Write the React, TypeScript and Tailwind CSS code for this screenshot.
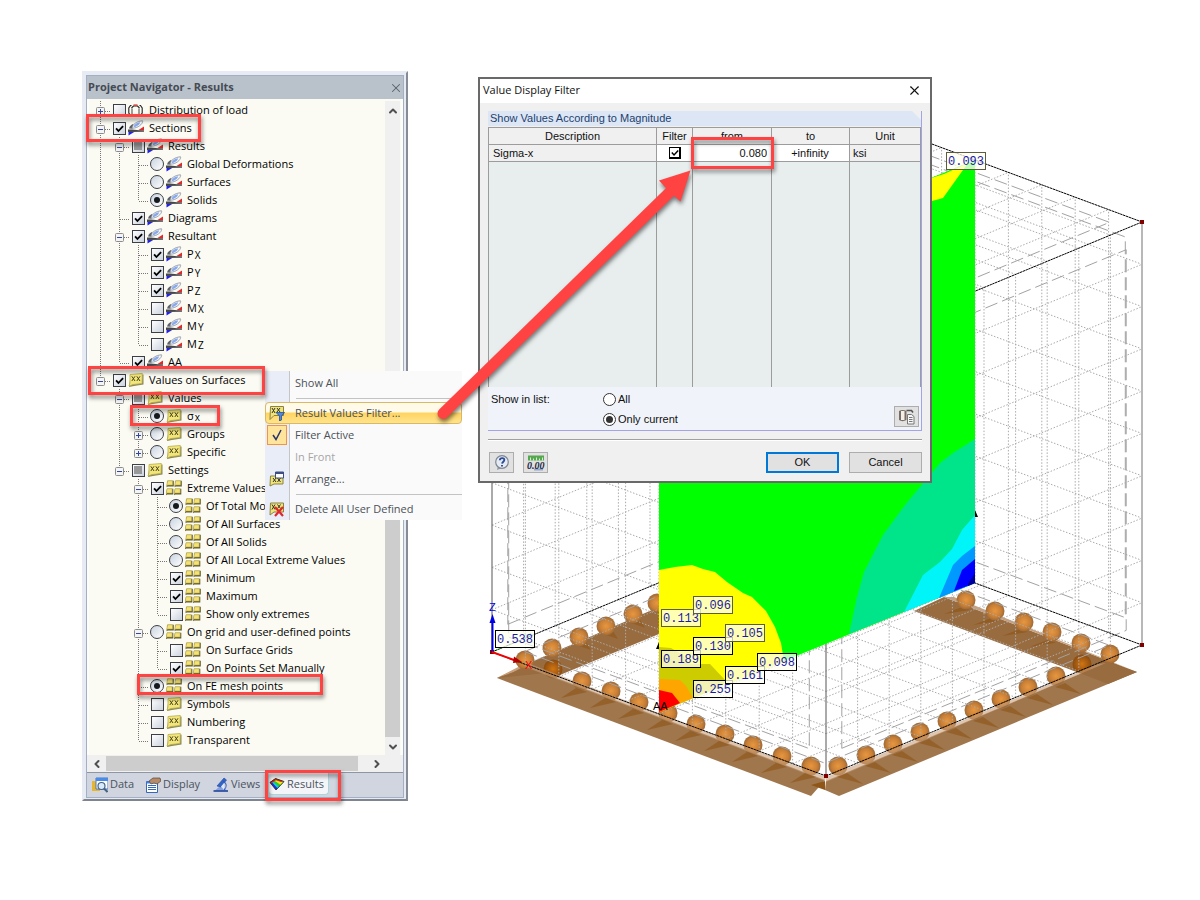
import React, { useState } from "react";
import { ChevronDown, ChevronLeft, ChevronRight, ChevronUp, X } from "lucide-react";

/* ------------------------------------------------------------------ */
/* Icons                                                               */
/* ------------------------------------------------------------------ */

type IconKind = "load" | "section" | "xx" | "grid";

function SectionIcon() {
  return (
    <svg viewBox="0 0 16 16" className="h-4 w-4 shrink-0">
      <path d="M0.500 15.500V11.500h6.500z" fill="#2323e0" />
      <path d="M10.500 10L16 6.500V10.500h-4z" fill="#dd2a2a" />
      <path d="M0 9.500h4l7 .8 5 .2v1.200l-16 .3z" fill="#45474c" />
      <path d="M1 8.600C1.500 6 3.500 4.800 5.500 3.800L4.500 8.800z" fill="#5c6068" />
      <path d="M4 8.200C4.500 4.500 8.500 1.200 14.500.8c.8 1.800-2.500 6.200-8 7.200z" fill="#f4f6fb" stroke="#858b96" strokeWidth=".8" />
      <path d="M5.500 7.200C6 4.600 9 2.600 12 2.300c0 1.600-2.300 4.500-6.500 4.900z" fill="#86a8ee" />
    </svg>
  );
}

function LoadIcon() {
  return (
    <svg viewBox="0 0 16 16" className="h-4 w-4 shrink-0" fill="none" stroke="#222" strokeWidth="1.100">
      <path d="M3.500 3.500H2.500L.8 6v5l1.700 2.500M11.500 3.500h1L14.200 6v5l-1.700 2.500" />
      <path d="M4 6.500V13M11 6.500V13" stroke="#555" />
      <path d="M3.500 6L5.500 4h4l2 2" />
      <path d="M5.500 3h4" stroke="#d22" />
    </svg>
  );
}

function XXIcon() {
  return (
    <svg viewBox="0 0 16 16" className="h-4 w-4 shrink-0">
      <path d="M2.500 3.500L15.500 2.500V12.500L6 14 1 15z" fill="#8b8857" />
      <path d="M2 2.500L14.300 1.500 14 11.500 5 12.500 1 14 2 11z" fill="#f2e67a" stroke="#b9ac4d" strokeWidth=".8" />
      <path d="M3.800 4.300l3.200 4.700M7 4.300L3.800 9M8.800 4.300L12 9M12 4.300L8.800 9" stroke="#4a4522" strokeWidth="1" />
    </svg>
  );
}

function GridIcon() {
  const cells = [
    [1.5, 0.8],
    [9.5, 0.8],
    [1, 8.8],
    [9, 8.8],
  ];
  return (
    <svg viewBox="0 0 16 16" className="h-4 w-4 shrink-0">
      {cells.map(([x, y]) => (
        <g key={`${x}-${y}`}>
          <path d={`M${x} ${y}h6.300v5.600h-6l-1.300 .8z`} fill="#5f5c33" />
          <path d={`M${x} ${y}h5.200v4.300h-5l-1 .7z`} fill="#f5e272" stroke="#a89b3f" strokeWidth=".5" />
        </g>
      ))}
    </svg>
  );
}

function NodeIcon({ kind }: { kind: IconKind }) {
  if (kind === "load") return <LoadIcon />;
  if (kind === "section") return <SectionIcon />;
  if (kind === "xx") return <XXIcon />;
  return <GridIcon />;
}

/* ------------------------------------------------------------------ */
/* Navigator tree                                                      */
/* ------------------------------------------------------------------ */

type State = "on" | "off" | "partial";

interface Node {
  label: string;
  sub?: string;
  guides: string;
  box: "check" | "radio";
  state: State;
  icon: IconKind;
  expander?: "+" | "-";
  last?: boolean;
  group?: string;
}

const nodes: Node[] = [
  { label: "Distribution of load", guides: "", box: "check", state: "off", icon: "load", expander: "+" },
  { label: "Sections", guides: "", box: "check", state: "on", icon: "section", expander: "-" },
  { label: "Results", guides: "|", box: "check", state: "partial", icon: "section", expander: "-" },
  { label: "Global Deformations", guides: "||", box: "radio", state: "off", icon: "section", group: "res" },
  { label: "Surfaces", guides: "||", box: "radio", state: "off", icon: "section", group: "res" },
  { label: "Solids", guides: "||", box: "radio", state: "on", icon: "section", last: true, group: "res" },
  { label: "Diagrams", guides: "|", box: "check", state: "on", icon: "section" },
  { label: "Resultant", guides: "|", box: "check", state: "on", icon: "section", expander: "-" },
  { label: "P", sub: "X", guides: "||", box: "check", state: "on", icon: "section" },
  { label: "P", sub: "Y", guides: "||", box: "check", state: "on", icon: "section" },
  { label: "P", sub: "Z", guides: "||", box: "check", state: "on", icon: "section" },
  { label: "M", sub: "X", guides: "||", box: "check", state: "off", icon: "section" },
  { label: "M", sub: "Y", guides: "||", box: "check", state: "off", icon: "section" },
  { label: "M", sub: "Z", guides: "||", box: "check", state: "off", icon: "section", last: true },
  { label: "AA", guides: "|", box: "check", state: "on", icon: "section", last: true },
  { label: "Values on Surfaces", guides: "", box: "check", state: "on", icon: "xx", expander: "-", last: true },
  { label: "Values", guides: " ", box: "check", state: "partial", icon: "xx", expander: "-" },
  { label: "σ", sub: "x", guides: " |", box: "radio", state: "on", icon: "xx", group: "val" },
  { label: "Groups", guides: " |", box: "radio", state: "off", icon: "xx", expander: "+", group: "val" },
  { label: "Specific", guides: " |", box: "radio", state: "off", icon: "xx", expander: "+", last: true, group: "val" },
  { label: "Settings", guides: " ", box: "check", state: "partial", icon: "xx", expander: "-", last: true },
  { label: "Extreme Values", guides: "  ", box: "check", state: "on", icon: "grid", expander: "-" },
  { label: "Of Total Model", guides: "  |", box: "radio", state: "on", icon: "grid", group: "ext" },
  { label: "Of All Surfaces", guides: "  |", box: "radio", state: "off", icon: "grid", group: "ext" },
  { label: "Of All Solids", guides: "  |", box: "radio", state: "off", icon: "grid", group: "ext" },
  { label: "Of All Local Extreme Values", guides: "  |", box: "radio", state: "off", icon: "grid", group: "ext" },
  { label: "Minimum", guides: "  |", box: "check", state: "on", icon: "grid" },
  { label: "Maximum", guides: "  |", box: "check", state: "on", icon: "grid" },
  { label: "Show only extremes", guides: "  |", box: "check", state: "off", icon: "grid", last: true },
  { label: "On grid and user-defined points", guides: "  ", box: "radio", state: "off", icon: "grid", expander: "-", group: "set" },
  { label: "On Surface Grids", guides: "  |", box: "check", state: "off", icon: "grid" },
  { label: "On Points Set Manually", guides: "  |", box: "check", state: "on", icon: "grid", last: true },
  { label: "On FE mesh points", guides: "  ", box: "radio", state: "on", icon: "grid", group: "set" },
  { label: "Symbols", guides: "  ", box: "check", state: "off", icon: "xx" },
  { label: "Numbering", guides: "  ", box: "check", state: "off", icon: "xx" },
  { label: "Transparent", guides: "  ", box: "check", state: "off", icon: "xx", last: true },
];

function Guide({ line }: { line: boolean }) {
  return (
    <svg viewBox="0 0 19 18" className="h-[18px] w-[19px] shrink-0">
      {line && <path d="M7.500 0V18" stroke="#777" strokeDasharray="1 1" />}
    </svg>
  );
}

function Connector({ expander, last }: { expander?: "+" | "-"; last?: boolean }) {
  return (
    <svg viewBox="0 0 19 18" className="h-[18px] w-[19px] shrink-0" fill="none">
      <path d={last ? "M7.500 0V10" : "M7.500 0V18"} stroke="#777" strokeDasharray="1 1" />
      <path d="M8 10.500H18" stroke="#777" strokeDasharray="1 1" />
      {expander && (
        <>
          <rect x="3.500" y="6.500" width="8" height="8" rx="1" fill="#f4f4f4" stroke="#8c8c8c" />
          <path d={expander === "+" ? "M5 10.500h5M7.500 8v5" : "M5 10.500h5"} stroke="#33489c" />
        </>
      )}
    </svg>
  );
}

function Check({ node }: { node: Node }) {
  if (node.box === "radio") {
    return (
      <span className="grid h-[14px] w-[14px] shrink-0 place-items-center">
        <input
          type="radio"
          name={node.group}
          defaultChecked={node.state === "on"}
          className="peer col-start-1 row-start-1 h-[14px] w-[14px] appearance-none rounded-full border border-[#3c3f45] bg-gradient-to-br from-[#c9d3df] to-white"
        />
        <span className="pointer-events-none col-start-1 row-start-1 hidden h-[6px] w-[6px] rounded-full bg-[#15181d] peer-checked:block" />
      </span>
    );
  }
  return (
    <span className="grid h-[14px] w-[14px] shrink-0 place-items-center">
      <input
        type="checkbox"
        defaultChecked={node.state === "on"}
        className="peer col-start-1 row-start-1 h-[13px] w-[13px] appearance-none border border-[#3c3f45] bg-gradient-to-br from-white to-[#ccd3de]"
      />
      {node.state === "partial" ? (
        <span className="pointer-events-none col-start-1 row-start-1 h-[8px] w-[8px] bg-[#989898]" />
      ) : (
        <svg viewBox="0 0 10 10" className="pointer-events-none col-start-1 row-start-1 hidden h-[9px] w-[9px] peer-checked:block">
          <path d="M1.200 4.800l2.600 3L9 2.300" fill="none" stroke="#000" strokeWidth="2" />
        </svg>
      )}
    </span>
  );
}

function TreeRow({ node }: { node: Node }) {
  return (
    <li className="flex h-[18px] items-center pl-1">
      {node.guides.split("").map((g, i) => (
        <Guide key={i} line={g === "|"} />
      ))}
      <Connector expander={node.expander} last={node.last} />
      <label className="flex items-center whitespace-nowrap">
        <Check node={node} />
        <span className="ml-[2px] flex">
          <NodeIcon kind={node.icon} />
        </span>
        <span className="ml-[5px] flex items-end leading-[18px]">
          {node.label}
          {node.sub && <span className="ml-px text-[10px] leading-[16px]">{node.sub}</span>}
        </span>
      </label>
    </li>
  );
}

function DataTabIcon() {
  return (
    <svg viewBox="0 0 16 16" className="h-4 w-4 shrink-0">
      <path d="M0 4h3l1 1h4v9H0z" fill="#e8b62d" />
      <path d="M4 1h12v11H4z" fill="#fff" stroke="#3f78d0" />
      <path d="M4 1h12v3H4z" fill="#4b8be8" />
      <circle cx="9.500" cy="9" r="3.500" fill="#d8ecfb" stroke="#49637f" strokeWidth="1.200" />
      <path d="M12 11.500l3.500 3.500" stroke="#49637f" strokeWidth="2" />
    </svg>
  );
}

function DisplayTabIcon() {
  return (
    <svg viewBox="0 0 16 16" className="h-4 w-4 shrink-0">
      <path d="M1.500 4.500h11v11h-11z" fill="#fff" stroke="#3568bd" />
      <path d="M1.500 4.500h11v2h-11z" fill="#4580dc" />
      <path d="M3 8.500h8M3 10.500h8M3 12.500h8" stroke="#3568bd" />
      <path d="M4 4l4-3 7 0 1 3-4 3-3-1-3 1z" fill="#b48a68" stroke="#59463b" strokeWidth=".7" />
    </svg>
  );
}

function ViewsTabIcon() {
  return (
    <svg viewBox="0 0 16 16" className="h-4 w-4 shrink-0">
      <path d="M1 14.500L8 8l7 6.500z" fill="#86a2de" />
      <path d="M4 9l7-8 2.500 2L8 10z" fill="#3264c7" stroke="#22489a" strokeWidth=".6" />
      <path d="M8 9.500l3-3.500v7z" fill="#dfe8fb" />
      <path d="M0.500 14h14.500" stroke="#28499c" strokeWidth="1.600" />
      <path d="M10 4c4 2 4 6 1 9" stroke="#2c58b8" fill="none" />
    </svg>
  );
}

function ResultsTabIcon() {
  return (
    <svg viewBox="0 0 16 16" className="h-4 w-4 shrink-0">
      <path d="M1 6.500L6.500 2.500 15 5.500 7 14z" fill="#1b31d6" />
      <path d="M2.200 5.600L6.500 2.500 15 5.500 8.500 12.200z" fill="#19c8e8" />
      <path d="M3.200 5L6.500 2.500 15 5.500 10 10.700z" fill="#25cf2f" />
      <path d="M4.500 4L6.500 2.500 15 5.500 11.800 8.900z" fill="#f3e21b" />
      <path d="M1 6l5.500-3.500 8 2.800L12 6 7 4.200 2 7.500z" fill="#e22318" />
      <path d="M1 6.500L6.500 2.500 15 5.500 7 14z" fill="none" stroke="#222" strokeWidth=".8" />
    </svg>
  );
}

const tabs = [
  { label: "Data", icon: <DataTabIcon />, cls: "w-[53px]" },
  { label: "Display", icon: <DisplayTabIcon />, cls: "w-[68px]" },
  { label: "Views", icon: <ViewsTabIcon />, cls: "w-[56px]" },
];

function Navigator() {
  return (
    <section className="absolute left-[82px] top-[71px] w-[326px] border-2 border-[#e6ebf4] border-b-[#7e8490] border-r-[#868b96] bg-[#e6ebf4] p-[2px] pb-px font-['Open_Sans','Noto_Sans',sans-serif] text-[11px] text-black">
      <div className="border border-[#a5afc4]">
        <header className="flex h-[23px] items-center justify-between bg-[#b9c1cb] pl-px">
          <h2 className="font-bold text-[#454b54]">Project Navigator - Results</h2>
          <button type="button" aria-label="Close navigator" className="flex">
            <X size={14} strokeWidth={1.8} className="text-[#5b6068]" />
          </button>
        </header>
        <div className="flex border-x-2 border-white/60 bg-[#fbfbf3] pt-[2px]">
          <ul className="h-[654px] min-w-0 flex-1 overflow-hidden">
            {nodes.map((n, i) => (
              <TreeRow key={i} node={n} />
            ))}
          </ul>
          <div className="mr-px flex w-[15px] flex-col items-center justify-between bg-[#f0f0f0]">
            <ChevronUp size={12} strokeWidth={4} className="mt-1 text-[#505050]" />
            <div className="flex w-full flex-1 flex-col justify-end pb-1">
              <div className="h-[262px] w-full bg-[#cdcdcd]" />
            </div>
            <ChevronDown size={12} strokeWidth={4} className="mb-[2px] text-[#505050]" />
          </div>
        </div>
        <div className="flex h-[18px] items-center border-b border-[#8e95a3] bg-[#f0f0f0] pl-1 pr-5">
          <ChevronLeft size={12} strokeWidth={4} className="text-[#505050]" />
          <div className="ml-[3px] h-[15px] w-[252px] bg-[#cdcdcd]" />
          <ChevronRight size={12} strokeWidth={4} className="ml-auto text-[#505050]" />
        </div>
        <nav className="flex h-6 items-start bg-[#d0d5df] pl-[5px] text-[#4c535e]">
          {tabs.map((t) => (
            <button key={t.label} type="button" className={`flex h-[23px] shrink-0 items-center gap-[2px] whitespace-nowrap ${t.cls}`}>
              {t.icon}
              {t.label}
            </button>
          ))}
          <button
            type="button"
            className="flex h-[22px] w-[60px] shrink-0 items-center gap-[2px] rounded-b border-b border-r border-[#a9d6da] bg-[#f3f5f8] pt-px"
          >
            <ResultsTabIcon />
            Results
          </button>
        </nav>
      </div>
    </section>
  );
}

/* ------------------------------------------------------------------ */
/* Context menu                                                        */
/* ------------------------------------------------------------------ */

function FilterMenuIcon() {
  return (
    <svg viewBox="0 0 16 16" className="h-4 w-4">
      <path d="M1.500 1.500h13v9H5l-4 4z" fill="#f0e476" stroke="#8a8244" />
      <path d="M3 3l3 5M6 3L3 8M8 3l3 4M11 3L8 7" stroke="#333" />
      <path d="M7 7.500h8.500l-3 3.500v4l-2 1v-5z" fill="#4d88dc" stroke="#274e92" strokeWidth=".8" />
    </svg>
  );
}

function ArrangeIcon() {
  return (
    <svg viewBox="0 0 16 16" className="h-4 w-4">
      <path d="M1.500 5h12.500v8H5l-4 2z" fill="#f0e476" stroke="#8a8244" />
      <path d="M4 7l3 4M7 7l-3 4M8.500 7l3 4M11.500 7l-3 4" stroke="#333" />
      <path d="M6.500 1h8v6h-8z" fill="#fff" stroke="#3d4f82" />
      <path d="M6.500 1h8v2h-8z" fill="#3d4f82" />
    </svg>
  );
}

function DeleteIcon() {
  return (
    <svg viewBox="0 0 16 16" className="h-4 w-4">
      <path d="M1.500 2h13v9H5l-4 3z" fill="#f0e476" stroke="#8a8244" />
      <path d="M3 3.500l3 5M6 3.500l-3 5M8.500 3.500l3 4M11.500 3.500l-3 4" stroke="#333" />
      <path d="M6 6l8 9M14 6l-8 9" stroke="#e0262e" strokeWidth="2.200" />
    </svg>
  );
}

function MenuItem({
  label,
  icon,
  highlight,
  disabled,
}: {
  label: string;
  icon?: React.ReactNode;
  highlight?: boolean;
  disabled?: boolean;
}) {
  const tone = disabled ? "text-[#a6a6a6]" : "text-[#4b5158]";
  const bg = highlight
    ? "rounded-sm border border-[#d9b866] bg-gradient-to-b from-[#fffbe8] from-45% via-[#ffd35e] via-50% to-[#ffe48c]"
    : "border border-transparent";
  return (
    <li>
      <button type="button" disabled={disabled} className={`flex h-[22px] w-full items-center text-left ${tone} ${bg}`}>
        <span className="flex w-[22px] items-center justify-center">{icon}</span>
        <span className="ml-[7px]">{label}</span>
      </button>
    </li>
  );
}

function Separator() {
  return (
    <li className="flex h-2 items-center pl-[31px]">
      <div className="h-px w-full bg-[#c3c3c3]" />
    </li>
  );
}

function ContextMenu() {
  return (
    <ul className="absolute left-[265px] top-[371px] w-[197px] bg-[#fafafa] bg-[linear-gradient(to_right,#e8edf7_24px,#c5c5c5_24px,#c5c5c5_25px,transparent_25px)] pt-px font-['Open_Sans','Noto_Sans',sans-serif] text-[11px]">
      <MenuItem label="Show All" />
      <Separator />
      <MenuItem label="Result Values Filter..." icon={<FilterMenuIcon />} highlight />
      <MenuItem
        label="Filter Active"
        icon={
          <span className="flex h-5 w-5 items-center justify-center border border-[#f2953c] bg-[#ffe49b]">
            <svg viewBox="0 0 12 12" className="h-3 w-3">
              <path d="M2 6l3 4.500L10 1" fill="none" stroke="#23356e" strokeWidth="1.500" />
            </svg>
          </span>
        }
      />
      <MenuItem label="In Front" disabled />
      <MenuItem label="Arrange..." icon={<ArrangeIcon />} />
      <Separator />
      <MenuItem label="Delete All User Defined" icon={<DeleteIcon />} />
    </ul>
  );
}

/* ------------------------------------------------------------------ */
/* Value display filter dialog                                         */
/* ------------------------------------------------------------------ */

function HelpIcon() {
  return (
    <svg viewBox="0 0 16 16" className="h-4 w-4">
      <path d="M3 15l1-4 4 2z" fill="#8f99a8" />
      <circle cx="8" cy="7" r="6.300" fill="#e6ebf2" stroke="#7b8695" strokeWidth="1.200" />
      <path d="M5.800 5.300C6 2.300 10.500 2.500 10.300 5c-.1 1.600-2 1.800-2.200 3.600M8 10v1.600" fill="none" stroke="#2b4b9b" strokeWidth="1.900" />
    </svg>
  );
}

function UnitsIcon() {
  return (
    <svg viewBox="0 0 18 16" className="h-4 w-[18px]">
      <path d="M1 .5h16v5H1z" fill="#55a84f" />
      <path d="M3.500 2.500v3M6.500 3.500v2M9.500 2.500v3M12.500 3.500v2M15.500 2.500v3" stroke="#d5f0cf" />
      <path d="M7 13.500h9v2H7z" fill="#8fa8d0" />
      <text x="0" y="13.500" fontSize="10" fontStyle="italic" fontWeight="bold" fontFamily="Liberation Serif, serif" fill="#1c2742">
        0.00
      </text>
    </svg>
  );
}

function PasteIcon() {
  return (
    <svg viewBox="0 0 18 18" className="h-[18px] w-[18px]">
      <path d="M1 3C3 1.500 6 1.500 8.500 3v9C6 13.500 3 13.500 1 12z" fill="#7a6c62" />
      <path d="M3 3h3.500v9H3z" fill="#f4efea" />
      <path d="M8.500 2.500h5l1.500 2" fill="none" stroke="#555" strokeWidth="1.600" />
      <path d="M9.500 6.500h4l2.500 2v7.500H9.500z" fill="#f5f5f5" stroke="#777" />
      <path d="M11 9.500h3.500M11 11.500h3.500M11 13.500h3.500" stroke="#777" />
    </svg>
  );
}

function FilterDialog() {
  const [from, setFrom] = useState("0.080");
  const [to, setTo] = useState("+infinity");
  const th = "border border-[#9c9c9c] bg-[#f0f0f0] p-0 pb-px text-center font-normal leading-[14px]";
  return (
    <section
      role="dialog"
      aria-label="Value Display Filter"
      className="absolute left-[478px] top-[77px] w-[454px] border-2 border-[#696969] bg-[#f0f0f0] font-['Liberation_Sans',Arial,sans-serif] text-[11px] text-[#111]"
    >
      <header className="flex h-6 items-center justify-between bg-white pb-px pl-[3px] pr-2">
        <h2 className="font-['Open_Sans','Noto_Sans',sans-serif] text-[11px]">Value Display Filter</h2>
        <button type="button" aria-label="Close dialog" className="flex">
          <X size={15} strokeWidth={1.8} />
        </button>
      </header>
      <div className="px-2 pb-2 pt-2">
        <div className="border-b border-r border-[#a3a3e8]">
          <div className="flex h-[15px] items-center bg-[#dce6f5] pl-[2px] text-[#1d3f6e] [clip-path:polygon(0_0,calc(100%-9px)_0,100%_9px,100%_100%,0_100%)]">
            Show Values According to Magnitude
          </div>
          <table className="mt-px h-[260px] w-full table-fixed border-collapse bg-[#e8eeee]">
            <colgroup>
              <col className="w-[168px]" />
              <col className="w-[36px]" />
              <col className="w-[79px]" />
              <col className="w-[78px]" />
              <col />
            </colgroup>
            <thead>
              <tr className="h-[17px]">
                <th className={th}>Description</th>
                <th className={th}>Filter</th>
                <th className={th}>from</th>
                <th className={th}>to</th>
                <th className={th}>Unit</th>
              </tr>
            </thead>
            <tbody>
              <tr className="h-[17px] leading-[15px]">
                <td className="border border-[#9c9c9c] bg-[#f0f0f0] p-0 pl-1">Sigma-x</td>
                <td className="border border-[#9c9c9c] bg-white p-0">
                  <span className="grid place-items-center">
                    <input
                      type="checkbox"
                      aria-label="Filter Sigma-x"
                      defaultChecked
                      className="peer col-start-1 row-start-1 h-[12px] w-[12px] appearance-none border border-b-2 border-r-2 border-black bg-white"
                    />
                    <svg viewBox="0 0 10 10" className="pointer-events-none col-start-1 row-start-1 hidden h-[8px] w-[8px] peer-checked:block">
                      <path d="M1 4.500l2.800 3L9 2" fill="none" stroke="#000" strokeWidth="1.800" />
                    </svg>
                  </span>
                </td>
                <td className="border border-[#9c9c9c] bg-white p-0">
                  <input aria-label="from" value={from} onChange={(e) => setFrom(e.target.value)} className="block h-[15px] w-full pr-1 text-right" />
                </td>
                <td className="border border-[#9c9c9c] bg-white p-0">
                  <input aria-label="to" value={to} onChange={(e) => setTo(e.target.value)} className="block h-[15px] w-full pr-px text-center" />
                </td>
                <td className="border border-[#9c9c9c] bg-[#f0f0f0] p-0 pl-[3px]">ksi</td>
              </tr>
              <tr>
                <td className="border border-[#9c9c9c] border-b-transparent" />
                <td className="border border-[#9c9c9c] border-b-transparent" />
                <td className="border border-[#9c9c9c] border-b-transparent" />
                <td className="border border-[#9c9c9c] border-b-transparent" />
                <td className="border border-[#9c9c9c] border-b-transparent" />
              </tr>
            </tbody>
          </table>
          <fieldset aria-label="Show in list" className="flex h-[43px] bg-[#f0f4fa] pl-[3px]">
            <span className="w-[112px] pt-1">Show in list:</span>
            <div className="flex flex-1 flex-col gap-[6px] pt-[5px]">
              {["All", "Only current"].map((l) => (
                <label key={l} className="flex h-[14px] items-center gap-[2px]">
                  <span className="grid place-items-center">
                    <input
                      type="radio"
                      name="list"
                      defaultChecked={l === "Only current"}
                      className="peer col-start-1 row-start-1 h-[13px] w-[13px] appearance-none rounded-full border border-[#333] bg-white"
                    />
                    <span className="pointer-events-none col-start-1 row-start-1 hidden h-[7px] w-[7px] rounded-full bg-[#333] peer-checked:block" />
                  </span>
                  {l}
                </label>
              ))}
            </div>
            <button type="button" aria-label="Paste from clipboard" className="mb-[3px] mr-[2px] flex h-[21px] w-[25px] items-center justify-center self-end border border-[#adadad] bg-[#e1e1e1]">
              <PasteIcon />
            </button>
          </fieldset>
        </div>
        <div className="mt-2 border-b border-t border-b-white border-t-[#a0a0a0]" />
        <footer className="mt-[11px] flex gap-[9px] pl-px">
          <button type="button" aria-label="Help" className="flex h-[21px] w-[25px] items-center justify-center border border-[#adadad] bg-[#e1e1e1]">
            <HelpIcon />
          </button>
          <button type="button" aria-label="Units and decimal places" className="flex h-[21px] w-[25px] items-center justify-center border border-[#adadad] bg-[#e1e1e1]">
            <UnitsIcon />
          </button>
          <div className="ml-auto flex gap-[10px]">
            <button type="button" className="h-[21px] w-[73px] border-2 border-[#0078d7] bg-[#e1e1e1]">
              OK
            </button>
            <button type="button" className="h-[21px] w-[73px] border border-[#adadad] bg-[#e1e1e1]">
              Cancel
            </button>
          </div>
        </footer>
      </div>
    </section>
  );
}

/* ------------------------------------------------------------------ */
/* 3D model view                                                       */
/* ------------------------------------------------------------------ */

type P = [number, number];
const add = (a: P, b: P, k = 1): P => [a[0] + b[0] * k, a[1] + b[1] * k];

const H = 423;
const left: P = [492, 652];
const alongU: P = [334, 124];
const alongV: P = [316, -131];
const up: P = [0, -H];
const front = add(left, alongU);
const right = add(front, alongV);
const back = add(left, alongV);

function seg(a: P, b: P) {
  return `M${a[0].toFixed(1)} ${a[1].toFixed(1)}L${b[0].toFixed(1)} ${b[1].toFixed(1)}`;
}

function Face({ origin, u, v }: { origin: P; u: P; v: P }) {
  const n = 10;
  const lines: string[] = [];
  for (let i = 1; i < n; i++) {
    const a = add(origin, u, i / n);
    lines.push(seg(a, add(a, v)));
    const b = add(origin, v, i / n);
    lines.push(seg(b, add(b, u)));
  }
  const at = (s: number, t: number) => add(add(origin, u, s), v, t);
  const inset = [at(0.05, 0.05), at(0.95, 0.05), at(0.95, 0.95), at(0.05, 0.95)];
  return (
    <g fill="none">
      <path d={lines.join("")} stroke="#ababab" strokeDasharray="1.500 1.700" />
      <polygon points={inset.map((p) => p.join(",")).join(" ")} stroke="#a2a2a2" strokeDasharray="13 5" />
    </g>
  );
}

const leftSpheres: P[] = [
  [582, 681], [611, 691], [639, 702], [668, 713], [696, 724], [725, 734], [753, 745], [782, 756], [811, 766],
];
const rightSpheres: P[] = [
  [838, 766], [866, 755], [893, 744], [920, 732], [947, 721], [974, 710], [1001, 699], [1028, 687], [1056, 676],
];
const rearSpheres: P[] = [
  [525, 660], [1110, 654],
  [552, 648], [579, 637], [606, 626], [633, 614], [657, 603],
  [1081, 643], [1052, 632], [1024, 622], [995, 611], [966, 600],
];
const darkSpheres: P[] = [
  [553, 669],
  [1082, 664],
];

const values: { x: number; y: number; t: string; soft?: boolean }[] = [
  { x: 661, y: 609, t: "0.113", soft: true },
  { x: 693, y: 596, t: "0.096", soft: true },
  { x: 661, y: 650, t: "0.189" },
  { x: 693, y: 637, t: "0.130" },
  { x: 725, y: 624, t: "0.105", soft: true },
  { x: 693, y: 680, t: "0.255" },
  { x: 725, y: 666, t: "0.161" },
  { x: 757, y: 653, t: "0.098" },
  { x: 495, y: 630, t: "0.538" },
  { x: 946, y: 152, t: "0.093", soft: true },
];

function Balls({ at, fill }: { at: P[]; fill: string }) {
  return (
    <>
      {at.map(([x, y]) => (
        <circle key={`${x}-${y}`} cx={x} cy={y} r="9.500" fill={fill} />
      ))}
    </>
  );
}

function Model() {
  return (
    <svg viewBox="470 80 700 730" className="absolute left-[470px] top-[80px] h-[730px] w-[700px]" role="img" aria-label="Stress results on section through solid">
      <defs>
        <radialGradient id="ball" cx="0.5" cy="0.5" r="0.55">
          <stop offset="0" stopColor="#e8973f" />
          <stop offset="0.6" stopColor="#c87f36" />
          <stop offset="1" stopColor="#8f6238" />
        </radialGradient>
        <radialGradient id="ballDark" cx="0.5" cy="0.5" r="0.55">
          <stop offset="0" stopColor="#d27412" />
          <stop offset="1" stopColor="#84480f" />
        </radialGradient>
      </defs>

      <polygon points="497,678 522,666 659,607 659,634 560,675 556,672" fill="#996c40" />
      <polygon points="497,678 524,664 535,660 512,673" fill="#c9a07c" />
      <polygon points="914,611 944,597 1137,672 1108,684 1074,671" fill="#996c40" />
      <polygon points="944,597 954,597 1137,672" fill="#c9a07c" />
      <g fill="#8f5617">
        {[579, 606, 633].map((x) => (
          <path key={x} d={`M${x - 3} ${645 - (x - 579) * 0.41}l10-3 5 8z`} opacity=".6" />
        ))}
        {[966, 995, 1024, 1052].map((x) => (
          <path key={x} d={`M${x - 4} ${607 + (x - 966) * 0.38}l8 3-26 4z`} opacity=".7" />
        ))}
      </g>
      <Balls at={rearSpheres} fill="url(#ball)" />
      <Balls at={darkSpheres} fill="url(#ballDark)" />
      <Balls at={leftSpheres} fill="url(#ball)" />
      <Balls at={rightSpheres} fill="url(#ball)" />

      <polygon points="497,678 528,667 825,780 811,796" fill="#996c40" fillOpacity=".93" />
      <polygon points="524,665 530,664 826,777 825,781 528,668" fill="#c9a07c" fillOpacity=".6" />
      <polygon points="825,790 826,781 1108,662 1137,672 839,796" fill="#996c40" fillOpacity=".93" />
      <polygon points="826,777 1098,664 1106,663 826,782" fill="#c9a07c" fillOpacity=".6" />
      <polygon points="811,785 825,781 825,790" fill="#8f5617" />
      <g fill="#8f5617">
        {leftSpheres.map(([x, y]) => (
          <path key={x} d={`M${x - 6} ${y + 7}l11 4-26 6z`} opacity=".65" />
        ))}
        {rightSpheres.map(([x, y]) => (
          <path key={x} d={`M${x - 1} ${y + 11}l10-4 16 11z`} opacity=".65" />
        ))}
      </g>

      <Face origin={left} u={alongU} v={alongV} />
      <Face origin={add(left, up)} u={alongU} v={alongV} />
      <Face origin={left} u={alongV} v={up} />
      <Face origin={back} u={alongU} v={up} />
      <Face origin={left} u={alongU} v={up} />
      <Face origin={front} u={alongV} v={up} />

      <g stroke="#000" strokeDasharray="2.500 .5" fill="none">
        <path d={seg(left, front) + seg(front, right) + seg(left, back) + seg(back, right)} />
        <path d={seg(add(front, up), add(right, up)) + seg(add(back, up), add(right, up)) + seg(add(left, up), add(front, up)) + seg(add(left, up), add(back, up))} />
      </g>
      <path d={seg(right, add(right, up))} stroke="#b8b8b8" strokeWidth="2" />
      <path d={seg(front, add(front, up)) + seg(left, add(left, up))} stroke="#7d7d7d" strokeWidth="1.300" />

      <g>
        <polygon points="659,289 975,160 975,583 659,712" fill="#00ff00" />
        <polygon points="925,180 944,174 968,163 943,198 925,203" fill="#ffff00" />
        <polygon points="975,439 953,453 940,463 930,475 920,487 905,505 883,535 864,572 857,597 849,634 975,583" fill="#00e58a" />
        <polygon points="975,515 962,530 952,549 940,562 923,575 904,612 975,583" fill="#00f5f8" />
        <polygon points="975,546 962,556 953,565 939,598 975,583" fill="#0099ff" />
        <polygon points="975,559 962,570 954,591 975,583" fill="#0000ff" />
        <polygon points="975,573 968,584 968,586 975,583" fill="#000099" />
        <polygon points="659,570 675,567 692,565 703,569 715,572 727,582 743,593 752,597 766,611 775,627 781,643 784,661 659,712" fill="#ffff00" />
        <polygon points="659,647 671,648 683,655 690,664 710,664 726,681 720,687 659,712" fill="#cccc00" />
        <polygon points="659,679 680,680 686,686 693,698 659,712" fill="#ffa500" />
        <polygon points="659,690 672,693 680,703 659,712" fill="#ff0000" />
      </g>
      <path d="M975 510l3 7h-3z M659 642l-3 7h3z" fill="#000" />

      <rect x="1140" y="220" width="4" height="4" fill="#800000" />
      <rect x="1140" y="643" width="4" height="4" fill="#800000" />
      <rect x="824" y="774" width="4" height="4" fill="#800000" />
      <rect x="490" y="650" width="4" height="4" fill="#800000" />

      <path d="M492.500 652V622" stroke="#0000e0" strokeWidth="2" />
      <path d="M489.500 623l3-9 3 9z" fill="#0000e0" />
      <path d="M492 652l22 8" stroke="#f00000" strokeWidth="2" />
      <path d="M514 656.500l8 5.500-9 1z" fill="#b00000" />
      <path d="M494 651l32-13" stroke="#00d000" strokeDasharray="1 1.500" />
      <g fontFamily="Liberation Sans, sans-serif" fontSize="11">
        <text x="489" y="611" fill="#0000e0">Z</text>
        <text x="525" y="669" fill="#ff0000">X</text>
        <text x="524" y="641" fill="#00d000">Y</text>
        <text x="653" y="710" fill="#000">AA</text>
      </g>

      {values.map((v) => (
        <g key={v.t}>
          <rect x={v.x + 0.5} y={v.y + 0.5} width="39" height="17" fill="#fffff0" fillOpacity=".75" stroke={v.soft ? "#5c5c40" : "#000"} />
          <text x={v.x + 2} y={v.y + 13} fontFamily="Liberation Mono, monospace" fontSize="12" fill="#1b1ba8">
            {v.t}
          </text>
        </g>
      ))}
    </svg>
  );
}

/* ------------------------------------------------------------------ */
/* Annotations                                                         */
/* ------------------------------------------------------------------ */

const frames = [
  "left-[86px] top-[114px] h-[28px] w-[115px]",
  "left-[88px] top-[366px] h-[29px] w-[177px]",
  "left-[130px] top-[405px] h-[21px] w-[90px]",
  "left-[137px] top-[674px] h-[21px] w-[186px]",
  "left-[265px] top-[770px] h-[31px] w-[76px]",
  "left-[691px] top-[137px] h-[32px] w-[83px]",
];

function Annotations() {
  return (
    <div className="pointer-events-none">
      {frames.map((f) => (
        <div key={f} className={`absolute border-[3px] border-[#ff4343] drop-shadow-[1px_3px_2px_rgba(0,0,0,0.5)] ${f}`} />
      ))}
      <svg viewBox="430 160 270 270" className="absolute left-[430px] top-[160px] h-[270px] w-[270px] drop-shadow-[1px_3px_2px_rgba(0,0,0,0.5)]">
        <path d="M443 413.500L671 191" stroke="#ff4343" strokeWidth="11" strokeLinecap="round" />
        <path d="M690.500 170.500L659 180.500 666 188 673 195 680.500 201.500z" fill="#ff4343" />
      </svg>
    </div>
  );
}

export default function App() {
  return (
    <main className="relative min-h-screen w-full overflow-hidden bg-white">
      <Model />
      <Navigator />
      <FilterDialog />
      <ContextMenu />
      <Annotations />
    </main>
  );
}
